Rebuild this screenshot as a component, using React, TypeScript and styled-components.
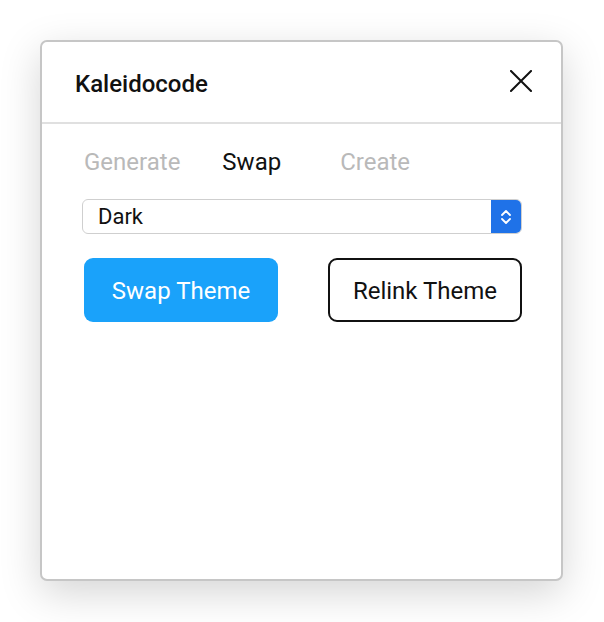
import React, { useState } from "react";
import styled, { createGlobalStyle } from "styled-components";

const GlobalStyle = createGlobalStyle`
  html, body {
    margin: 0;
    padding: 0;
    background: #ffffff;
    font-family: Roboto, "Liberation Sans", sans-serif;
  }
`;

const Page = styled.div`
  box-sizing: border-box;
  min-height: 100vh;
  padding: 40px 0 0 40px;
`;

const Panel = styled.div`
  box-sizing: border-box;
  width: 523px;
  height: 541px;
  border: 2px solid #c6c6c6;
  border-radius: 7px;
  background: #ffffff;
  box-shadow: 0 12px 40px rgba(0, 0, 0, 0.17);
  display: flex;
  flex-direction: column;
  overflow: hidden;
`;

const Header = styled.div`
  height: 82px;
  box-sizing: border-box;
  display: flex;
  align-items: center;
  justify-content: space-between;
  padding: 0 28px 0 33px;
  border-bottom: 2px solid #e0e0e0;
`;

const Title = styled.h1`
  margin: 4px 0 0;
  font-size: 24px;
  font-weight: 500;
  color: #111111;
`;

const CloseButton = styled.button`
  border: none;
  background: none;
  padding: 0;
  margin-top: -2px;
  width: 24px;
  height: 24px;
  display: flex;
  align-items: center;
  justify-content: center;
  cursor: pointer;
`;

const Body = styled.div`
  padding: 24px 39px 0 40px;
  display: flex;
  flex-direction: column;
`;

const Tabs = styled.div`
  display: flex;
  align-items: center;
  padding-left: 2px;
  height: 28px;
`;

const Tab = styled.button<{ $active?: boolean; $gap: number }>`
  border: none;
  background: none;
  padding: 0;
  margin-right: ${(p) => p.$gap}px;
  font-family: inherit;
  font-size: 24px;
  color: ${(p) => (p.$active ? "#111111" : "#b9b9b9")};
  cursor: pointer;
`;

const Select = styled.div`
  margin-top: 23px;
  height: 35px;
  box-sizing: border-box;
  border: 1.5px solid #cfcfcf;
  border-radius: 6px;
  display: flex;
  align-items: stretch;
  overflow: hidden;
`;

const SelectValue = styled.div`
  flex: 1;
  display: flex;
  align-items: center;
  padding-left: 15px;
  font-size: 22px;
  color: #111111;
`;

const SelectArrow = styled.div`
  width: 30px;
  background: #1f72e8;
  display: flex;
  align-items: center;
  justify-content: center;
`;

const Actions = styled.div`
  margin-top: 24px;
  display: flex;
  justify-content: space-between;
  padding-left: 2px;
`;

const ActionButton = styled.button<{ $primary?: boolean }>`
  box-sizing: border-box;
  width: 194px;
  height: 64px;
  padding-top: 2px;
  border-radius: 9px;
  font-family: inherit;
  font-size: 24px;
  cursor: pointer;
  border: ${(p) => (p.$primary ? "none" : "2px solid #111111")};
  background: ${(p) => (p.$primary ? "#1aa2fa" : "#ffffff")};
  color: ${(p) => (p.$primary ? "#ffffff" : "#111111")};
`;

const tabs = [
  { label: "Generate", gap: 42 },
  { label: "Swap", gap: 59 },
  { label: "Create", gap: 0 },
];

export default function App() {
  const [active, setActive] = useState("Swap");

  return (
    <Page>
      <GlobalStyle />
      <Panel>
        <Header>
          <Title>Kaleidocode</Title>
          <CloseButton aria-label="Close">
            <svg width="22" height="22" viewBox="0 0 22 22">
              <path
                d="M1 1L21 21M21 1L1 21"
                stroke="#111"
                strokeWidth="2"
                strokeLinecap="square"
              />
            </svg>
          </CloseButton>
        </Header>
        <Body>
          <Tabs>
            {tabs.map((t) => (
              <Tab
                key={t.label}
                $gap={t.gap}
                $active={active === t.label}
                onClick={() => setActive(t.label)}
              >
                {t.label}
              </Tab>
            ))}
          </Tabs>
          <Select>
            <SelectValue>Dark</SelectValue>
            <SelectArrow>
              <svg width="12" height="18" viewBox="0 0 12 18">
                <path
                  d="M2 7L6 3L10 7M2 11L6 15L10 11"
                  fill="none"
                  stroke="#fff"
                  strokeWidth="1.8"
                  strokeLinecap="round"
                  strokeLinejoin="round"
                />
              </svg>
            </SelectArrow>
          </Select>
          <Actions>
            <ActionButton $primary>Swap Theme</ActionButton>
            <ActionButton>Relink Theme</ActionButton>
          </Actions>
        </Body>
      </Panel>
    </Page>
  );
}
